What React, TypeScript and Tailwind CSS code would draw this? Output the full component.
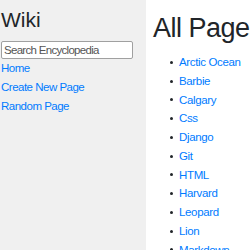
export default function App() {
  const pages = [
    "Arctic Ocean",
    "Barbie",
    "Calgary",
    "Css",
    "Django",
    "Git",
    "HTML",
    "Harvard",
    "Leopard",
    "Lion",
    "Markdown",
    "Python",
  ];
  return (
    <div
      className="flex h-[250px] w-[250px] overflow-hidden bg-white text-[#212529]"
      style={{ fontFamily: '"Liberation Sans", Arial, sans-serif' }}
    >
      <div className="w-[146px] shrink-0 bg-[#f0f0f0] pl-px">
        <h2 className="mt-[7px] text-[21px] leading-[25px] font-medium">Wiki</h2>
        <input
          className="mt-[9px] block h-[18px] w-[132px] rounded-[2px] border border-[#a0a0a0] bg-white px-[2px] text-[11.5px] tracking-[-0.7px] text-[#555] placeholder:text-[#555] outline-none"
          placeholder="Search Encyclopedia"
          readOnly
        />
        <div className="text-[11.5px] leading-[18.75px] tracking-[-0.5px]">
          <div><a className="text-[#007bff]">Home</a></div>
          <div><a className="text-[#007bff]">Create New Page</a></div>
          <div><a className="text-[#007bff]">Random Page</a></div>
        </div>
      </div>
      <div className="min-w-0 flex-1 pl-[7px]">
        <h1 className="mt-[12px] whitespace-nowrap text-[27px] leading-[32px] tracking-[-0.5px] font-medium">
          All Pages
        </h1>
        <ul className="mt-[9px] whitespace-nowrap pl-[17px] text-[11.5px] leading-[18.75px] tracking-[-0.35px]">
          {pages.map((p) => (
            <li key={p} className="flex items-center gap-[6px]">
              <span className="h-[3px] w-[3px] shrink-0 rounded-full bg-[#212529]" />
              <a className="text-[#007bff]">{p}</a>
            </li>
          ))}
        </ul>
      </div>
    </div>
  );
}
